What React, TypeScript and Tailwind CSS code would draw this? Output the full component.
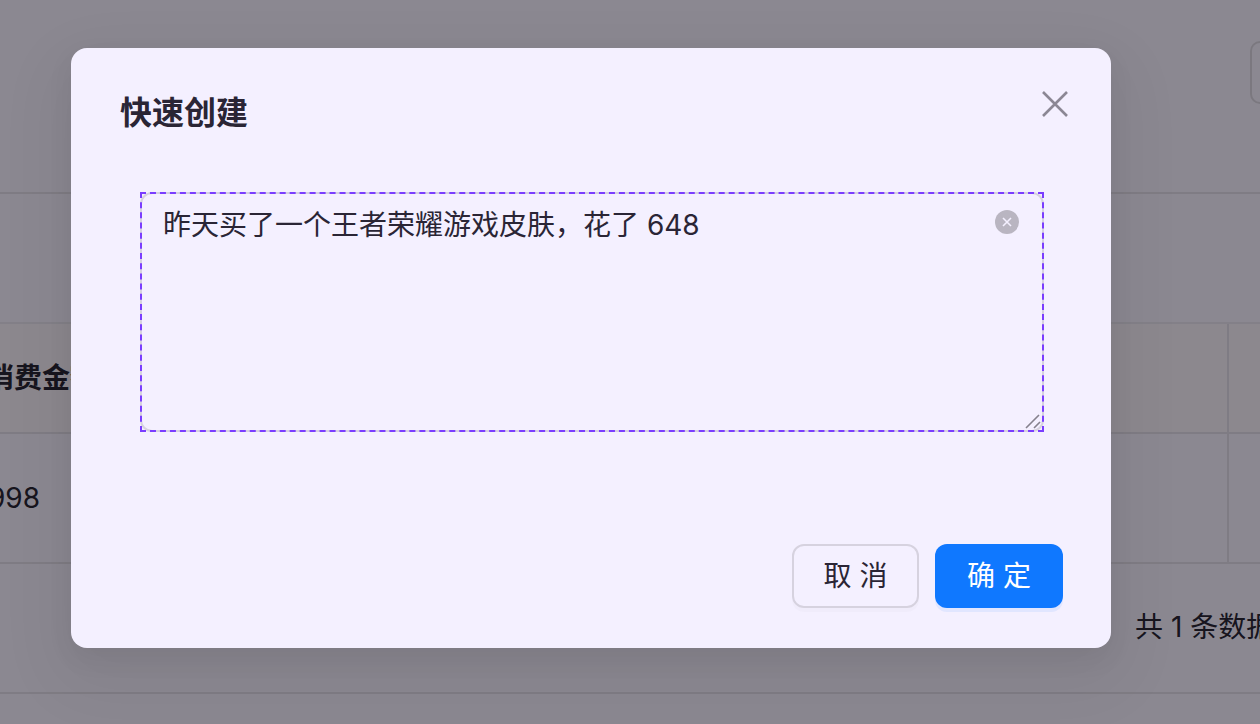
import React from 'react';

const font = 'font-[Inter,"Noto_Sans_CJK_SC",sans-serif]';

const App: React.FC = () => {
  return (
    <div className={`relative w-[1260px] h-[724px] overflow-hidden bg-[#f5f0ff] text-[#2a2535] ${font}`}>
      {/* page behind the dialog */}
      <div className="flex flex-col">
        <div className="h-[194px] border-b-2 border-[#e0dbe9] flex justify-end pt-[41px]">
          <div className="w-[10px] h-[63px] border-2 border-r-0 border-[#d8d3e0] rounded-l-[12px]" />
        </div>
        <div className="h-[130px] border-b-2 border-[#e6e2f0]" />
        <div className="h-[110px] border-b-2 border-[#e0dbe9] bg-[#f6f0fa] flex items-center">
          <span className="flex-1 -ml-[14px] text-[28px] font-bold whitespace-nowrap">消费金额</span>
          <div className="w-[33px] h-full border-l-2 border-[#e0dbe9]" />
        </div>
        <div className="h-[130px] border-b-2 border-[#e0dbe9] flex items-center">
          <span className="flex-1 -ml-[12px] text-[28px] whitespace-nowrap">998</span>
          <div className="w-[33px] h-full border-l-2 border-[#e0dbe9]" />
        </div>
        <div className="h-[130px] border-b-2 border-[#e0dbe9] flex justify-end pt-[44px]">
          <span className="w-[125px] text-[28px] leading-[38px] whitespace-nowrap">共 1 条数据</span>
        </div>
      </div>

      {/* mask */}
      <div className="absolute inset-0 bg-black/[.43]" />

      {/* dialog */}
      <div className="absolute left-[71px] top-[48px] w-[1040px] h-[600px] bg-[#f4f0ff] rounded-[16px] shadow-[0_24px_64px_16px_rgba(0,0,0,0.05),0_10px_28px_0_rgba(0,0,0,0.06)] flex flex-col">
        <div className="flex items-start justify-between pl-[49px] pr-[43px] pt-[44px] h-[144px]">
          <h2 className="text-[32px] leading-[42px] font-bold">快速创建</h2>
          <svg className="w-[26px] h-[26px] mt-[-1px] text-[#8b8794]" viewBox="0 0 26 26" fill="none" stroke="currentColor" strokeWidth="2.6">
            <path d="M1 1L25 25M25 1L1 25" />
          </svg>
        </div>

        <div className="relative ml-[69px] w-[904px] h-[240px] outline-2 outline-dashed outline-[#7a3dff] -outline-offset-2">
          <textarea
            readOnly
            value="昨天买了一个王者荣耀游戏皮肤，花了 648"
            className={`block w-full h-full resize-none bg-transparent border-2 border-[#d6d2df] rounded-[12px] pl-[21px] pr-[60px] pt-[11px] text-[28px] leading-[40px] text-[#2a2535] outline-none ${font}`}
          />
          <span className="absolute right-[25px] top-[18px] w-[24px] h-[24px] rounded-full bg-[#b9b5c1] flex items-center justify-center">
            <svg className="w-[10px] h-[10px]" viewBox="0 0 10 10" fill="none" stroke="#f4f0ff" strokeWidth="1.6">
              <path d="M1 1L9 9M9 1L1 9" />
            </svg>
          </span>
          {/* resize handle */}
          <svg className="absolute right-[3px] bottom-[3px] w-[16px] h-[16px]" viewBox="0 0 16 16" fill="none" stroke="#85818d" strokeWidth="1.6">
            <path d="M1 15L14 2M9 15L15 9" />
          </svg>
        </div>

        <div className="flex justify-end gap-[16px] pr-[48px] mt-[112px]">
          <button className="w-[127px] h-[64px] rounded-[12px] border-2 border-[#d6d2df] text-[28px] text-[#2a2535] tracking-[0.28em] indent-[0.28em] shadow-[0_4px_0_rgba(0,0,0,0.015)]">
            取消
          </button>
          <button className="w-[128px] h-[64px] rounded-[12px] bg-[#0f78ff] text-[28px] text-white tracking-[0.28em] indent-[0.28em] shadow-[0_4px_0_rgba(15,120,255,0.08)]">
            确定
          </button>
        </div>
      </div>
    </div>
  );
};

export default App;
